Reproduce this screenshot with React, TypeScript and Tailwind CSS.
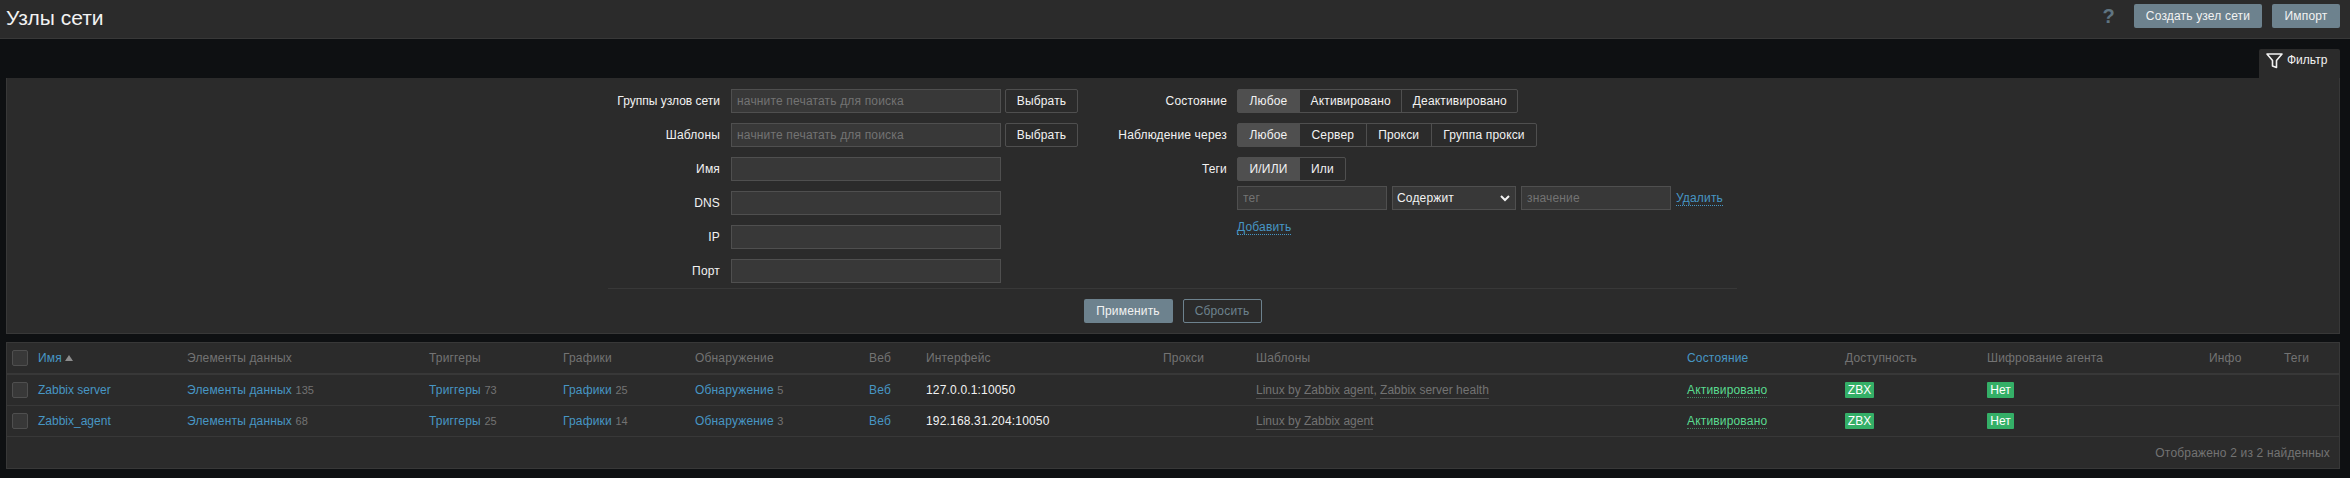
const GRID =
  'grid grid-cols-[31px_149px_242px_134px_132px_174px_57px_237px_93px_431px_158px_142px_222px_75px_55px] items-center';

const HOSTS = [
  {
    name: 'Zabbix server',
    items: 135,
    triggers: 73,
    graphs: 25,
    discovery: 5,
    iface: '127.0.0.1:10050',
    templates: ['Linux by Zabbix agent', 'Zabbix server health'],
  },
  {
    name: 'Zabbix_agent',
    items: 68,
    triggers: 25,
    graphs: 14,
    discovery: 3,
    iface: '192.168.31.204:10050',
    templates: ['Linux by Zabbix agent'],
  },
];

const HEADERS = ['Элементы данных', 'Триггеры', 'Графики', 'Обнаружение', 'Веб', 'Интерфейс', 'Прокси', 'Шаблоны'];

const TextInput = ({ placeholder, className }: { placeholder?: string; className: string }) => (
  <input
    placeholder={placeholder}
    className={`h-6 border border-[#4f4f4f] bg-[#383838] px-[5px] text-[#f2f2f2] outline-none placeholder:text-[#737373] ${className}`}
  />
);

const Segmented = ({ options, cellClass }: { options: string[]; cellClass: string }) => (
  <div className="flex h-6 rounded-[2px] border border-[#4f4f4f]">
    {options.map((option, i) => (
      <span
        key={option}
        className={
          i === 0
            ? 'flex w-[61px] items-center justify-center bg-[#4f4f4f] text-[#f2f2f2]'
            : `flex items-center border-l border-[#4f4f4f] text-[#f2f2f2] ${cellClass}`
        }
      >
        {option}
      </span>
    ))}
  </div>
);

const Row = ({ label, labelClass, children }: { label: string; labelClass: string; children: React.ReactNode }) => (
  <div className="flex h-6 items-center">
    <label className={`shrink-0 text-right text-[#f2f2f2] ${labelClass}`}>{label}</label>
    {children}
  </div>
);

const LEFT_LABEL = 'w-[112px] mr-[11px]';
const RIGHT_LABEL = 'w-[149px] mr-[10px]';

const Checkbox = () => <span className="ml-[5px] block size-4 rounded-[2px] border border-[#4f4f4f] bg-[#383838]" />;

const Count = ({ label, value }: { label: string; value: number }) => (
  <span>
    <a className="text-[#4796c4]">{label}</a> <sup className="static text-[11px] tracking-normal text-[#737373]">{value}</sup>
  </span>
);

const Badge = ({ children, className }: { children: string; className: string }) => (
  <span className={`flex h-4 items-center justify-center rounded-[1px] bg-[#34af67] tracking-normal text-[#ffffff] ${className}`}>
    {children}
  </span>
);

export default function App() {
  return (
    <div className="flex h-[478px] flex-col bg-[#0e1012] font-['Liberation_Sans',Arial,sans-serif] text-xs leading-[14px] tracking-[0.17px]">
      <header className="flex h-[39px] shrink-0 items-start justify-between border-b border-[#383838] bg-[#2b2b2b] pr-[10px] pl-[6px]">
        <h1 className="mt-[6px] text-[21px] leading-6 tracking-normal text-[#f2f2f2]">Узлы сети</h1>
        <div className="mt-1 flex items-center">
          <span className="mr-[19px] text-xl leading-6 font-bold text-[#5f7481]">?</span>
          <button className="h-6 w-32 rounded-[2px] bg-[#6d828e] text-[#f2f2f2]">Создать узел сети</button>
          <button className="ml-[10px] h-6 w-[68px] rounded-[2px] bg-[#6d828e] text-[#f2f2f2]">Импорт</button>
        </div>
      </header>

      <main className="flex flex-col pr-[10px] pl-[6px]">
        <div className="mt-[10px] flex justify-end">
          <div className="flex h-[29px] w-[81px] items-start rounded-t-[2px] bg-[#2b2b2b] pt-1 pl-[7px] text-[#f2f2f2]">
            <svg viewBox="0 0 17 16" className="mr-1 h-4 w-[17px] shrink-0" fill="none" stroke="#f2f2f2" strokeWidth="1.6">
              <path d="M1 1h15l-5.500 6.500v7l-4-1.500v-5.500z" strokeLinejoin="round" />
            </svg>
            <span className="leading-[14px] tracking-normal">Фильтр</span>
          </div>
        </div>

        <section className="h-64 border border-t-0 border-[#383838] bg-[#2b2b2b] pt-[11px]">
          <div className="ml-[601px] w-[1129px]">
            <div className="flex">
              <div className="flex w-[470px] flex-col gap-[10px]">
                <Row label="Группы узлов сети" labelClass={`${LEFT_LABEL} tracking-normal`}>
                  <TextInput placeholder="начните печатать для поиска" className="w-[270px]" />
                  <button className="ml-1 h-6 w-[73px] rounded-[2px] border border-[#4f4f4f] text-[#f2f2f2]">Выбрать</button>
                </Row>
                <Row label="Шаблоны" labelClass={LEFT_LABEL}>
                  <TextInput placeholder="начните печатать для поиска" className="w-[270px]" />
                  <button className="ml-1 h-6 w-[73px] rounded-[2px] border border-[#4f4f4f] text-[#f2f2f2]">Выбрать</button>
                </Row>
                {['Имя', 'DNS', 'IP', 'Порт'].map((label) => (
                  <Row key={label} label={label} labelClass={LEFT_LABEL}>
                    <TextInput className="w-[270px]" />
                  </Row>
                ))}
              </div>

              <div className="flex flex-col">
                <Row label="Состояние" labelClass={RIGHT_LABEL}>
                  <Segmented options={['Любое', 'Активировано', 'Деактивировано']} cellClass="px-[10.5px]" />
                </Row>
                <div className="mt-[10px]">
                  <Row label="Наблюдение через" labelClass={RIGHT_LABEL}>
                    <Segmented options={['Любое', 'Сервер', 'Прокси', 'Группа прокси']} cellClass="px-[11.5px]" />
                  </Row>
                </div>
                <div className="mt-[10px]">
                  <Row label="Теги" labelClass={RIGHT_LABEL}>
                    <Segmented options={['И/ИЛИ', 'Или']} cellClass="px-[11px]" />
                  </Row>
                </div>
                <div className="mt-[5px] ml-[159px] flex items-center gap-[5px]">
                  <TextInput placeholder="тег" className="w-[150px]" />
                  <div className="flex h-6 w-[124px] items-center justify-between border border-[#4f4f4f] bg-[#383838] pr-[5px] pl-1 text-[#f2f2f2]">
                    Содержит
                    <svg viewBox="0 0 10 7" className="h-[7px] w-[10px]" fill="none" stroke="#f2f2f2" strokeWidth="2">
                      <path d="M1 1l4 4 4-4" />
                    </svg>
                  </div>
                  <TextInput placeholder="значение" className="w-[150px]" />
                  <a className="border-b border-dotted border-[#4796c4] text-[#4796c4]">Удалить</a>
                </div>
                <a className="mt-[10px] ml-[159px] w-fit border-b border-dotted border-[#4796c4] text-[#4796c4]">Добавить</a>
              </div>
            </div>

            <div className="mt-[5px] flex justify-center gap-[10px] border-t border-[#383838] pt-[10px]">
              <button className="h-6 w-[89px] rounded-[2px] bg-[#6d828e] text-[#f2f2f2]">Применить</button>
              <button className="h-6 w-[79px] rounded-[2px] border border-[#6d828e] text-[#6d828e]">Сбросить</button>
            </div>
          </div>
        </section>

        <section className="mt-2 border border-[#383838] bg-[#2b2b2b]">
          <div className={`${GRID} h-[32px] border-b-2 border-[#383838] text-[#737373]`}>
            <Checkbox />
            <span className="flex items-center gap-[3px] text-[#4796c4]">
              Имя
              <svg viewBox="0 0 8 6" className="h-[6px] w-2" fill="#8c8c8c">
                <path d="M4 0l4 6H0z" />
              </svg>
            </span>
            {HEADERS.map((title) => (
              <span key={title}>{title}</span>
            ))}
            <span className="text-[#4796c4]">Состояние</span>
            <span>Доступность</span>
            <span>Шифрование агента</span>
            <span>Инфо</span>
            <span>Теги</span>
          </div>

          {HOSTS.map((host) => (
            <div key={host.name} className={`${GRID} h-[31px] border-b border-[#383838]`}>
              <Checkbox />
              <a className="tracking-normal text-[#4796c4]">{host.name}</a>
              <Count label="Элементы данных" value={host.items} />
              <Count label="Триггеры" value={host.triggers} />
              <Count label="Графики" value={host.graphs} />
              <Count label="Обнаружение" value={host.discovery} />
              <a className="text-[#4796c4]">Веб</a>
              <span className="text-[#f2f2f2]">{host.iface}</span>
              <span />
              <span className="tracking-normal text-[#737373]">
                {host.templates.map((template, i) => (
                  <span key={template}>
                    {i > 0 && ', '}
                    <a className="border-b border-[#4f4f4f] pb-px">{template}</a>
                  </span>
                ))}
              </span>
              <span>
                <a className="border-b border-dotted border-[#59db8f]/50 text-[#59db8f]">Активировано</a>
              </span>
              <Badge className="w-[29px]">ZBX</Badge>
              <Badge className="w-[27px]">Нет</Badge>
              <span />
              <span />
            </div>
          ))}

          <div className="flex h-[31px] items-center justify-end pr-[9px] text-[#737373]">Отображено 2 из 2 найденных</div>
        </section>
      </main>
    </div>
  );
}
